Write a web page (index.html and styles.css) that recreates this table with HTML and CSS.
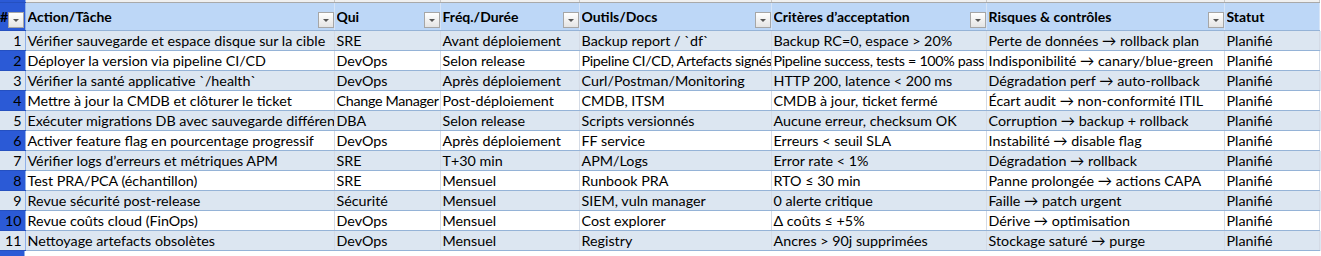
FILE: index.html
```html
<!DOCTYPE html>
<html lang="fr">
<head>
<meta charset="utf-8">
<title>Plan</title>
<link rel="stylesheet" href="styles.css">
</head>
<body>
<table class="sheet">
  <colgroup>
    <col class="c-num"><col class="c-act"><col class="c-qui"><col class="c-freq"><col class="c-out"><col class="c-crit"><col class="c-risk"><col class="c-stat"><col class="c-rest">
  </colgroup>
  <tr class="strip"><td class="rh"></td><td></td><td></td><td></td><td></td><td></td><td></td><td></td><td class="rest"></td></tr>
  <tr class="head">
    <th class="rh"><div class="hc hc-num"><span class="ht-num">#</span><span class="dd"></span></div></th>
    <th><div class="hc"><span class="ht">Action/Tâche</span><span class="dd"></span></div></th>
    <th><div class="hc"><span class="ht">Qui</span><span class="dd"></span></div></th>
    <th><div class="hc"><span class="ht">Fréq./Durée</span><span class="dd"></span></div></th>
    <th><div class="hc"><span class="ht">Outils/Docs</span><span class="dd"></span></div></th>
    <th><div class="hc"><span class="ht">Critères d’acceptation</span><span class="dd"></span></div></th>
    <th><div class="hc"><span class="ht">Risques &amp; contrôles</span><span class="dd"></span></div></th>
    <th><div class="hc"><span class="ht">Statut</span></div></th>
    <th class="rest"></th>
  </tr>
  <tr class="band"><td class="rh">1</td><td>Vérifier sauvegarde et espace disque sur la cible</td><td>SRE</td><td>Avant déploiement</td><td>Backup report / `df`</td><td>Backup RC=0, espace &gt; 20%</td><td>Perte de données → rollback plan</td><td>Planifié</td><td class="rest"></td></tr>
  <tr><td class="rh">2</td><td>Déployer la version via pipeline CI/CD</td><td>DevOps</td><td>Selon release</td><td class="tight">Pipeline CI/CD, Artefacts signés</td><td class="tight">Pipeline success, tests = 100% pass</td><td>Indisponibilité → canary/blue-green</td><td>Planifié</td><td class="rest"></td></tr>
  <tr class="band"><td class="rh">3</td><td>Vérifier la santé applicative `/health`</td><td>DevOps</td><td>Après déploiement</td><td>Curl/Postman/Monitoring</td><td>HTTP 200, latence &lt; 200 ms</td><td>Dégradation perf → auto-rollback</td><td>Planifié</td><td class="rest"></td></tr>
  <tr><td class="rh">4</td><td>Mettre à jour la CMDB et clôturer le ticket</td><td class="tight">Change Manager</td><td>Post-déploiement</td><td>CMDB, ITSM</td><td>CMDB à jour, ticket fermé</td><td>Écart audit → non-conformité ITIL</td><td>Planifié</td><td class="rest"></td></tr>
  <tr class="band"><td class="rh">5</td><td>Exécuter migrations DB avec sauvegarde différentielle</td><td>DBA</td><td>Selon release</td><td>Scripts versionnés</td><td>Aucune erreur, checksum OK</td><td>Corruption → backup + rollback</td><td>Planifié</td><td class="rest"></td></tr>
  <tr><td class="rh">6</td><td>Activer feature flag en pourcentage progressif</td><td>DevOps</td><td>Après déploiement</td><td>FF service</td><td>Erreurs &lt; seuil SLA</td><td>Instabilité → disable flag</td><td>Planifié</td><td class="rest"></td></tr>
  <tr class="band"><td class="rh">7</td><td>Vérifier logs d’erreurs et métriques APM</td><td>SRE</td><td>T+30 min</td><td>APM/Logs</td><td>Error rate &lt; 1%</td><td>Dégradation → rollback</td><td>Planifié</td><td class="rest"></td></tr>
  <tr><td class="rh">8</td><td>Test PRA/PCA (échantillon)</td><td>SRE</td><td>Mensuel</td><td>Runbook PRA</td><td>RTO ≤ 30 min</td><td>Panne prolongée → actions CAPA</td><td>Planifié</td><td class="rest"></td></tr>
  <tr class="band"><td class="rh">9</td><td>Revue sécurité post-release</td><td>Sécurité</td><td>Mensuel</td><td>SIEM, vuln manager</td><td>0 alerte critique</td><td>Faille → patch urgent</td><td>Planifié</td><td class="rest"></td></tr>
  <tr><td class="rh">10</td><td>Revue coûts cloud (FinOps)</td><td>DevOps</td><td>Mensuel</td><td>Cost explorer</td><td>Δ coûts ≤ +5%</td><td>Dérive → optimisation</td><td>Planifié</td><td class="rest"></td></tr>
  <tr class="band"><td class="rh">11</td><td>Nettoyage artefacts obsolètes</td><td>DevOps</td><td>Mensuel</td><td>Registry</td><td>Ancres &gt; 90j supprimées</td><td>Stockage saturé → purge</td><td>Planifié</td><td class="rest"></td></tr>
</table>
</body>
</html>
```
FILE: styles.css
```css
html, body {
  margin: 0;
  padding: 0;
  background: #ffffff;
}
body {
  font-family: Lato, "Liberation Sans", "DejaVu Sans", sans-serif;
  font-size: 14.3px;
  color: #000;
  height: 256px;
  overflow: hidden;
  background: linear-gradient(to right, #2b5ad6 0, #2b5ad6 24px, #8fb0e8 24px, #8fb0e8 25px, #ffffff 25px);
}
.sheet {
  border-collapse: collapse;
  table-layout: fixed;
  width: 1321px;
}
.c-num { width: 25px; }
.c-act { width: 309px; }
.c-qui { width: 106px; }
.c-freq { width: 139px; }
.c-out { width: 192px; }
.c-crit { width: 215px; }
.c-risk { width: 238px; }
.c-stat { width: 95px; }
.c-rest { width: 2px; }

td, th {
  padding: 0 2px;
  white-space: nowrap;
  overflow: hidden;
  text-overflow: clip;
  text-align: left;
  vertical-align: middle;
}
td.tight {
  letter-spacing: -0.3px;
}

/* top strip */
.strip td {
  height: 2px;
  padding: 0;
  background: #f0f0f0;
  border-right: 1px solid #c8c8c8;
  border-bottom: 1px solid #a9a9a9;
}
.strip td.rest { border-right: none; background: #f0f0f0; }

/* header */
.head th {
  height: 27px;
  padding: 0;
  background: #bdd7f7;
  border-right: 1px solid #d6e4f7;
  border-bottom: 1px solid #95b3d7;
  font-weight: bold;
  font-size: 14px;
}
.hc {
  display: flex;
  height: 27px;
  align-items: center;
  padding-left: 2px;
}
.hc-num {
  padding-left: 0;
  gap: 1px;
}
.ht {
  flex: 1;
  overflow: hidden;
}
.ht-num {
  flex: none;
  width: 7px;
  text-align: left;
}
.dd {
  align-self: flex-end;
  flex: none;
  width: 14px;
  height: 14px;
  margin-bottom: 2px;
  border: 1px solid #a6a6a6;
  background: linear-gradient(#ffffff, #e4e4e4);
  position: relative;
}
.dd::after {
  content: "";
  position: absolute;
  left: 4px;
  top: 6px;
  border-left: 3px solid transparent;
  border-right: 3px solid transparent;
  border-top: 3px solid #555;
}

/* body rows */
tr:not(.strip):not(.head) td {
  height: 19px;
  border-right: 1px solid #d4dbe6;
  border-bottom: 1px solid #95b3d7;
  background: #ffffff;
}
tr.band td {
  background: #dce6f1 !important;
}
td.rh, th.rh, .strip td.rh {
  background: #2b5ad6 !important;
  border-right: 1px solid #8fb0e8 !important;
  border-bottom: 1px solid #2550c0 !important;
  text-align: right;
  padding: 0 3px 0 0;
}
th.rh { padding: 0; }
td.rest, th.rest {
  background: #ffffff !important;
  border-right: none !important;
  border-bottom: none !important;
  border-left: 1px solid #95b3d7;
}
```
